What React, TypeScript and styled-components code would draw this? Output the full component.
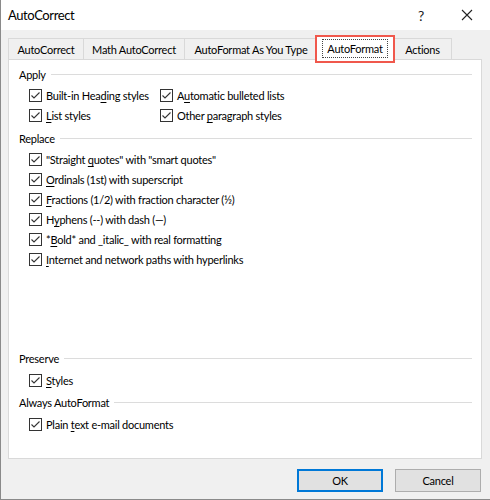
import React from "react";
import styled, { createGlobalStyle } from "styled-components";

const GlobalStyle = createGlobalStyle`
  html, body {
    margin: 0;
    padding: 0;
    background: #f0f0f0;
  }
  body {
    font-family: Lato, "Noto Sans", sans-serif;
    font-size: 11px;
    letter-spacing: -0.25px;
    color: #000;
  }
`;

const Window = styled.div`
  width: 490px;
  height: 500px;
  box-sizing: border-box;
  display: flex;
  flex-direction: column;
  background: #f0f0f0;
  border-left: 1px solid #8a8a8a;
  border-bottom: 1px solid #8a8a8a;
`;

const TitleBar = styled.div`
  height: 30px;
  flex-shrink: 0;
  display: flex;
  align-items: center;
  background: #fff;
  padding-left: 7px;
`;

const Title = styled.div`
  flex: 1;
  font-size: 13px;
  letter-spacing: -0.4px;
  color: #000;
`;

const TitleButton = styled.div`
  width: 46px;
  height: 30px;
  display: flex;
  align-items: center;
  justify-content: center;
  font-size: 14px;
  color: #222;
`;

const Body = styled.div`
  padding: 6px 8px 0 7px;
  display: flex;
  flex-direction: column;
`;

const TabStrip = styled.div`
  height: 24px;
  display: flex;
  align-items: flex-end;
  position: relative;
  z-index: 1;
`;

const Tab = styled.div<{ $w: number; $active?: boolean }>`
  position: relative;
  box-sizing: border-box;
  width: ${(p) => p.$w}px;
  height: ${(p) => (p.$active ? 25 : 22)}px;
  margin: ${(p) => (p.$active ? "0 -2px -1px -2px" : "0")};
  z-index: ${(p) => (p.$active ? 2 : 0)};
  display: flex;
  align-items: center;
  justify-content: center;
  background: ${(p) => (p.$active ? "#fff" : "#f0f0f0")};
  border: 1px solid #d9d9d9;
  border-bottom: ${(p) => (p.$active ? "none" : "1px solid #d9d9d9")};
  border-right: ${(p) => (p.$active ? "1px solid #d9d9d9" : "none")};
  color: #000;
  white-space: nowrap;
  padding-bottom: ${(p) => (p.$active ? 2 : 0)}px;

  &:last-child {
    border-right: 1px solid #d9d9d9;
  }
`;

const FocusLabel = styled.span`
  outline: 1px dotted #444;
  outline-offset: 1px;
  padding: 1px 3px;
`;

const Highlight = styled.div`
  position: absolute;
  left: -1px;
  right: -1px;
  top: -2px;
  bottom: -2px;
  border: 2px solid #f0584c;
  pointer-events: none;
`;

const Panel = styled.div`
  height: 400px;
  box-sizing: border-box;
  margin-top: -1px;
  background: #fff;
  border: 1px solid #d9d9d9;
  padding: 6px 9px 24px 10px;
  display: flex;
  flex-direction: column;
`;

const Section = styled.div<{ $mt?: number; $push?: boolean }>`
  margin-top: ${(p) => (p.$push ? "auto" : `${p.$mt ?? 0}px`)};
`;

const SectionHead = styled.div<{ $mb?: number }>`
  display: flex;
  align-items: center;
  height: 16px;
  margin-bottom: ${(p) => p.$mb ?? 3}px;
`;

const SectionLine = styled.div`
  flex: 1;
  height: 1px;
  margin-left: 5px;
  background: #dcdcdc;
`;

const Grid = styled.div`
  display: grid;
  grid-template-columns: 131px auto;
  padding-left: 10px;
`;

const List = styled.div<{ $row: number }>`
  display: flex;
  flex-direction: column;
  padding-left: 10px;

  & > * {
    height: ${(p) => p.$row}px;
  }
`;

const Row = styled.label`
  height: 20px;
  display: flex;
  align-items: center;
  white-space: nowrap;
`;

const Box = styled.span`
  width: 13px;
  height: 13px;
  box-sizing: border-box;
  border: 1px solid #333;
  margin-right: 4px;
  display: flex;
  align-items: center;
  justify-content: center;
  flex-shrink: 0;
  background: #fff;
`;

const Key = styled.span`
  text-decoration: underline;
  text-underline-offset: 2px;
`;

const Footer = styled.div`
  display: flex;
  justify-content: flex-end;
  gap: 12px;
  padding: 10px 1px 0 0;
`;

const Button = styled.div<{ $primary?: boolean }>`
  width: 86px;
  height: 23px;
  box-sizing: border-box;
  display: flex;
  align-items: center;
  justify-content: center;
  background: #e1e1e1;
  border: ${(p) => (p.$primary ? "2px solid #0078d7" : "1px solid #adadad")};
  color: #000;
`;

const Check = () => (
  <Box>
    <svg width="11" height="11" viewBox="0 0 11 11">
      <path d="M1.5 5.5 L4 8 L9.5 2.5" fill="none" stroke="#333" strokeWidth="1.1" />
    </svg>
  </Box>
);

type Item = { pre: string; k: string; post: string };

const CheckRow = ({ pre, k, post }: Item) => (
  <Row>
    <Check />
    <span>
      {pre}
      <Key>{k}</Key>
      {post}
    </span>
  </Row>
);

const replaceItems: Item[] = [
  { pre: "\"Straight ", k: "q", post: "uotes\" with \"smart quotes\"" },
  { pre: "", k: "O", post: "rdinals (1st) with superscript" },
  { pre: "", k: "F", post: "ractions (1/2) with fraction character (½)" },
  { pre: "H", k: "y", post: "phens (--) with dash (—)" },
  { pre: "*", k: "B", post: "old* and _italic_ with real formatting" },
  { pre: "", k: "I", post: "nternet and network paths with hyperlinks" },
];

const tabs = [
  { label: "AutoCorrect", w: 75 },
  { label: "Math AutoCorrect", w: 101 },
  { label: "AutoFormat As You Type", w: 133 },
  { label: "AutoFormat", w: 80, active: true },
  { label: "Actions", w: 59 },
];

const App = () => (
  <>
    <GlobalStyle />
    <Window>
      <TitleBar>
        <Title>AutoCorrect</Title>
        <TitleButton>?</TitleButton>
        <TitleButton>
          <svg width="12" height="12" viewBox="0 0 12 12">
            <path d="M1 1 L11 11 M11 1 L1 11" stroke="#222" strokeWidth="1.1" />
          </svg>
        </TitleButton>
      </TitleBar>
      <Body>
        <TabStrip>
          {tabs.map((t) => (
            <Tab key={t.label} $w={t.w} $active={t.active}>
              {t.active ? <FocusLabel>{t.label}</FocusLabel> : t.label}
              {t.active && <Highlight />}
            </Tab>
          ))}
        </TabStrip>
        <Panel>
          <Section>
            <SectionHead>
              Apply
              <SectionLine />
            </SectionHead>
            <Grid>
              <CheckRow pre="Built-in Hea" k="d" post="ing styles" />
              <CheckRow pre="A" k="u" post="tomatic bulleted lists" />
              <CheckRow pre="" k="L" post="ist styles" />
              <CheckRow pre="Other " k="p" post="aragraph styles" />
            </Grid>
          </Section>
          <Section $mt={5}>
            <SectionHead>
              Replace
              <SectionLine />
            </SectionHead>
            <List $row={19.4}>
              {replaceItems.map((it) => (
                <CheckRow key={it.post} pre={it.pre} k={it.k} post={it.post} />
              ))}
            </List>
          </Section>
          <Section $push>
            <SectionHead $mb={4}>
              Preserve
              <SectionLine />
            </SectionHead>
            <List $row={20}>
              <CheckRow pre="" k="S" post="tyles" />
            </List>
          </Section>
          <Section $mt={4}>
            <SectionHead $mb={4}>
              Always AutoFormat
              <SectionLine />
            </SectionHead>
            <List $row={20}>
              <CheckRow pre="Plain " k="t" post="ext e-mail documents" />
            </List>
          </Section>
        </Panel>
        <Footer>
          <Button $primary>OK</Button>
          <Button>Cancel</Button>
        </Footer>
      </Body>
    </Window>
  </>
);

export default App;
